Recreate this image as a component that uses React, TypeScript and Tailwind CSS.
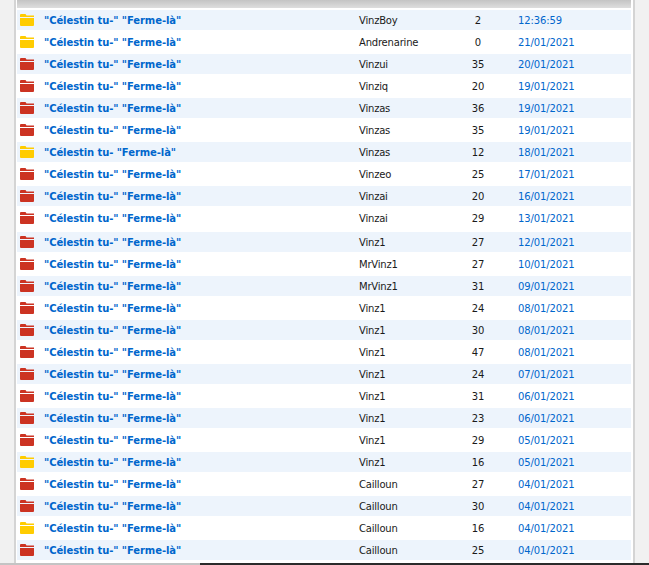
const rows = [
  { title: '"Célestin tu-" "Ferme-là"', color: 'y', author: 'VinzBoy', count: '2', date: '12:36:59' },
  { title: '"Célestin tu-" "Ferme-là"', color: 'y', author: 'Andrenarine', count: '0', date: '21/01/2021' },
  { title: '"Célestin tu-" "Ferme-là"', color: 'r', author: 'Vinzui', count: '35', date: '20/01/2021' },
  { title: '"Célestin tu-" "Ferme-là"', color: 'r', author: 'Vinziq', count: '20', date: '19/01/2021' },
  { title: '"Célestin tu-" "Ferme-là"', color: 'r', author: 'Vinzas', count: '36', date: '19/01/2021' },
  { title: '"Célestin tu-" "Ferme-là"', color: 'r', author: 'Vinzas', count: '35', date: '19/01/2021' },
  { title: '"Célestin tu- "Ferme-là"', color: 'y', author: 'Vinzas', count: '12', date: '18/01/2021' },
  { title: '"Célestin tu-" "Ferme-là"', color: 'r', author: 'Vinzeo', count: '25', date: '17/01/2021' },
  { title: '"Célestin tu-" "Ferme-là"', color: 'r', author: 'Vinzai', count: '20', date: '16/01/2021' },
  { title: '"Célestin tu-" "Ferme-là"', color: 'r', author: 'Vinzai', count: '29', date: '13/01/2021', tall: true },
  { title: '"Célestin tu-" "Ferme-là"', color: 'r', author: 'Vinz1', count: '27', date: '12/01/2021' },
  { title: '"Célestin tu-" "Ferme-là"', color: 'r', author: 'MrVinz1', count: '27', date: '10/01/2021' },
  { title: '"Célestin tu-" "Ferme-là"', color: 'r', author: 'MrVinz1', count: '31', date: '09/01/2021' },
  { title: '"Célestin tu-" "Ferme-là"', color: 'r', author: 'Vinz1', count: '24', date: '08/01/2021' },
  { title: '"Célestin tu-" "Ferme-là"', color: 'r', author: 'Vinz1', count: '30', date: '08/01/2021' },
  { title: '"Célestin tu-" "Ferme-là"', color: 'r', author: 'Vinz1', count: '47', date: '08/01/2021' },
  { title: '"Célestin tu-" "Ferme-là"', color: 'r', author: 'Vinz1', count: '24', date: '07/01/2021' },
  { title: '"Célestin tu-" "Ferme-là"', color: 'r', author: 'Vinz1', count: '31', date: '06/01/2021' },
  { title: '"Célestin tu-" "Ferme-là"', color: 'r', author: 'Vinz1', count: '23', date: '06/01/2021' },
  { title: '"Célestin tu-" "Ferme-là"', color: 'r', author: 'Vinz1', count: '29', date: '05/01/2021' },
  { title: '"Célestin tu-" "Ferme-là"', color: 'y', author: 'Vinz1', count: '16', date: '05/01/2021' },
  { title: '"Célestin tu-" "Ferme-là"', color: 'r', author: 'Cailloun', count: '27', date: '04/01/2021' },
  { title: '"Célestin tu-" "Ferme-là"', color: 'r', author: 'Cailloun', count: '30', date: '04/01/2021' },
  { title: '"Célestin tu-" "Ferme-là"', color: 'y', author: 'Cailloun', count: '16', date: '04/01/2021' },
  { title: '"Célestin tu-" "Ferme-là"', color: 'r', author: 'Cailloun', count: '25', date: '04/01/2021' },
]

function Folder({ color }: { color: string }) {
  const fill = color === 'y' ? '#ffcc00' : '#cc3322'
  return (
    <svg width="14" height="12" viewBox="0 0 14 12" className="shrink-0">
      <path d="M0 1Q0 0 1 0H5.5L6.5 1.5H14V3H0Z" fill={fill} />
      <path d="M0 4H14V11Q14 12 13 12H1Q0 12 0 11Z" fill={fill} />
    </svg>
  )
}

export default function App() {
  return (
    <div className="h-[565px] w-[649px] overflow-hidden bg-[#f1f1f1] flex flex-col font-['DejaVu_Sans',sans-serif]">
      <div className="flex-1 min-h-0 mx-[14px] bg-white border-x-2 border-[#d4d4d4] pl-px pr-0.5 flex flex-col">
        <div className="h-2 shrink-0 bg-gradient-to-b from-[#c4c4c4] to-[#dedede]" />
        <div className="pt-0.5 flex flex-col">
          {rows.map((r, i) => (
            <div
              key={i}
              className={`flex items-center ${i % 2 === 0 ? 'h-5 bg-[#edf4fc]' : r.tall ? 'h-[26px] pb-0.5' : 'h-6'}`}
            >
              <div className="w-[27px] pl-[3px] shrink-0 flex"><Folder color={r.color} /></div>
              <div className="w-[315px] shrink-0 text-[10px] font-bold tracking-[-0.08px] text-[#0066cc]">{r.title}</div>
              <div className="w-[99px] shrink-0 text-[10px] tracking-[-0.2px] text-[#1a1a1a]">{r.author}</div>
              <div className="w-[40px] shrink-0 text-[10px] text-center text-[#1a1a1a]">{r.count}</div>
              <div className="ml-[20px] text-[10px] tracking-[-0.1px] text-[#0066cc]">{r.date}</div>
            </div>
          ))}
        </div>
      </div>
      <div className="h-0.5 shrink-0 flex">
        <div className="w-[200px] bg-[#c4c4c4]" />
        <div className="flex-1 bg-[#2b2b2b]" />
      </div>
    </div>
  )
}
